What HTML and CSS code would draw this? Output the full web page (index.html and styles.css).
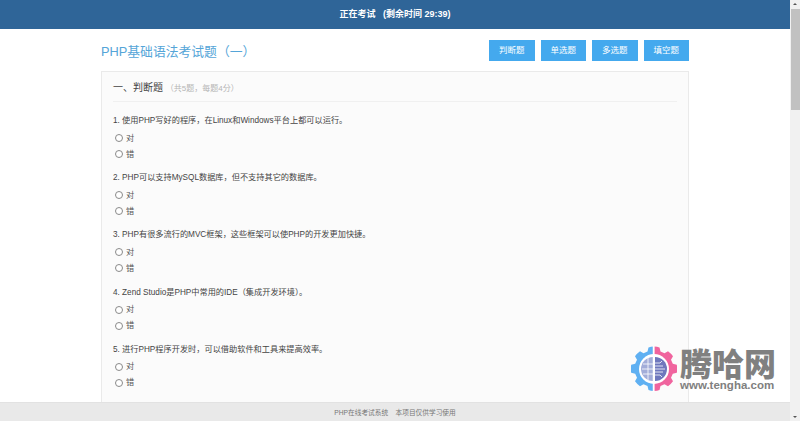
FILE: index.html
```html
<!DOCTYPE html>
<html>
<head>
    <title>PHP基础语法考试题</title>
    <link rel="stylesheet" href="styles.css">
</head>
<body>
    <div class="app">
        <div class="page">
            <div class="top-bar">正在考试 &nbsp; (剩余时间 29:39)</div>
            <div class="content">
                <div class="title-row">
                    <h1 class="exam-title">PHP基础语法考试题（一）</h1>
                    <div class="tabs">
                        <a class="tab">判断题</a>
                        <a class="tab">单选题</a>
                        <a class="tab">多选题</a>
                        <a class="tab">填空题</a>
                    </div>
                </div>
                <div class="card">
                    <h2 class="section-title">一、判断题 <small>（共5题，每题4分）</small></h2>

                    <div class="question">
                        <p>1. 使用PHP写好的程序，在Linux和Windows平台上都可以运行。</p>
                        <label class="option"><input type="radio" name="q1"> 对</label>
                        <label class="option"><input type="radio" name="q1"> 错</label>
                    </div>
                    <div class="question">
                        <p>2. PHP可以支持MySQL数据库，但不支持其它的数据库。</p>
                        <label class="option"><input type="radio" name="q2"> 对</label>
                        <label class="option"><input type="radio" name="q2"> 错</label>
                    </div>
                    <div class="question">
                        <p>3. PHP有很多流行的MVC框架，这些框架可以使PHP的开发更加快捷。</p>
                        <label class="option"><input type="radio" name="q3"> 对</label>
                        <label class="option"><input type="radio" name="q3"> 错</label>
                    </div>
                    <div class="question">
                        <p>4. Zend Studio是PHP中常用的IDE（集成开发环境）。</p>
                        <label class="option"><input type="radio" name="q4"> 对</label>
                        <label class="option"><input type="radio" name="q4"> 错</label>
                    </div>
                    <div class="question">
                        <p>5. 进行PHP程序开发时，可以借助软件和工具来提高效率。</p>
                        <label class="option"><input type="radio" name="q5"> 对</label>
                        <label class="option"><input type="radio" name="q5"> 错</label>
                    </div>
                </div>
            </div>
            <div class="footer">PHP在线考试系统 &nbsp;&nbsp; 本项目仅供学习使用</div>
        </div>
        <div class="scrollbar">
            <span class="arrow-up"></span>
            <span class="thumb"></span>
            <span class="arrow-down"></span>
        </div>
    </div>

    <div class="watermark">
        <svg class="wm-logo" width="46" height="46" viewBox="0 0 46 46">
            <path fill="#5fb0f2" d="M22.500 1v44a22 22 0 0 1-5-1l-1-4-4-1.800-3.500 2a22 22 0 0 1-5-5l2-3.500-1.800-4-4-1a22 22 0 0 1 0-8l4-1 1.800-4-2-3.500a22 22 0 0 1 5-5l3.500 2 4-1.800 1-4a22 22 0 0 1 5-1z"/>
            <path fill="#f0649e" d="M23.500 1v44a22 22 0 0 0 5-1l1-4 4-1.800 3.500 2a22 22 0 0 0 5-5l-2-3.500 1.800-4 4-1a22 22 0 0 0 0-8l-4-1-1.800-4 2-3.500a22 22 0 0 0-5-5l-3.500 2-4-1.800-1-4a22 22 0 0 0-5-1z"/>
            <circle cx="23" cy="23" r="15" fill="#fff"/>
            <path d="M22 11a12 12 0 0 0 0 24z" fill="#a3add9"/>
            <path d="M24 11a12 12 0 0 1 0 24z" fill="#6f78bd"/>
            <path d="M22.500 0v46" stroke="#fff" stroke-width="1.500"/>
            <g stroke="#fff" stroke-width="0.800" fill="none">
                <path d="M12 18h10M11 23h11M12 28h10M17 11.500v23"/>
                <path d="M24 17h5l2-2M24 20h8M24 23h10M24 26h8M24 29h5l2 2"/>
            </g>
        </svg>
        <div class="wm-text">
            <div class="wm-name">腾哈网</div>
            <div class="wm-url">www.tengha.com</div>
        </div>
    </div>
</body>
</html>
```

FILE: styles.css
```css
* {
    box-sizing: border-box;
}
html, body {
    height: 100%;
}
body {
    margin: 0;
    overflow: hidden;
    font-family: "Liberation Sans", "Noto Sans CJK SC", sans-serif;
    color: #444;
    background: #fff;
}
.app {
    display: flex;
    height: 100vh;
}
.page {
    flex: 1;
    min-width: 0;
    display: flex;
    flex-direction: column;
}
.top-bar {
    height: 29px;
    flex: none;
    background: #2f6598;
    color: #fff;
    font-size: 9px;
    font-weight: bold;
    line-height: 29px;
    text-align: center;
}
.content {
    flex: 1;
    min-height: 0;
    overflow: hidden;
    padding: 0 101px;
}
.title-row {
    display: flex;
    justify-content: space-between;
    align-items: center;
    height: 42px;
}
.exam-title {
    margin: 0;
    font-size: 12.800px;
    font-weight: normal;
    color: #55a5d8;
}
.tabs {
    display: flex;
    gap: 6px;
}
.tab {
    width: 45.500px;
    height: 21px;
    background: #44a9ee;
    color: #fff;
    font-size: 8.500px;
    line-height: 21px;
    text-align: center;
}
.card {
    height: 340px;
    padding: 0 11px;
    background: #fbfbfb;
    border: 1px solid #eaeaea;
}
.section-title {
    margin: 0 0 10px;
    height: 30px;
    line-height: 31px;
    font-size: 10px;
    font-weight: normal;
    color: #444;
    border-bottom: 1px solid #f0f0f0;
}
.section-title small {
    font-size: 8px;
    color: #b5b5b5;
}
.question {
    height: 57.200px;
}
.question p {
    margin: 0;
    height: 18px;
    font-size: 8.200px;
    line-height: 18px;
    color: #444;
}
.option {
    display: flex;
    align-items: center;
    gap: 3px;
    height: 16px;
    padding-left: 2px;
    font-size: 8.200px;
    line-height: 15px;
    color: #555;
}
.option input {
    appearance: none;
    width: 8px;
    height: 8px;
    margin: 0;
    background: #fff;
    border: 1px solid #8a8a8a;
    border-radius: 50%;
}
.footer {
    height: 19px;
    flex: none;
    background: #e9e9e9;
    border-top: 1px solid #e2e2e2;
    color: #777;
    font-size: 6.700px;
    line-height: 19px;
    text-align: center;
}
.scrollbar {
    width: 10px;
    flex: none;
    position: relative;
    background: #f1f1f1;
}
.thumb {
    position: absolute;
    top: 9px;
    left: 1px;
    right: 0;
    height: 101px;
    background: #c1c1c1;
}
.arrow-up, .arrow-down {
    position: absolute;
    left: 3px;
    width: 0;
    height: 0;
    border-left: 2px solid transparent;
    border-right: 2px solid transparent;
}
.arrow-up {
    top: 3px;
    border-bottom: 2px solid #555;
}
.arrow-down {
    bottom: 3px;
    border-top: 2px solid #555;
}
/* site watermark sits over the page */
.watermark {
    position: absolute;
    left: 631px;
    top: 346px;
    display: flex;
    align-items: center;
    gap: 3px;
}
.wm-name {
    font-family: "Noto Sans CJK SC", sans-serif;
    font-size: 32px;
    font-weight: 900;
    line-height: 32px;
    color: #808080;
}
.wm-url {
    margin-top: 1px;
    font-family: "Liberation Sans", sans-serif;
    font-size: 11.500px;
    font-weight: bold;
    line-height: 13px;
    color: #808080;
}
```
